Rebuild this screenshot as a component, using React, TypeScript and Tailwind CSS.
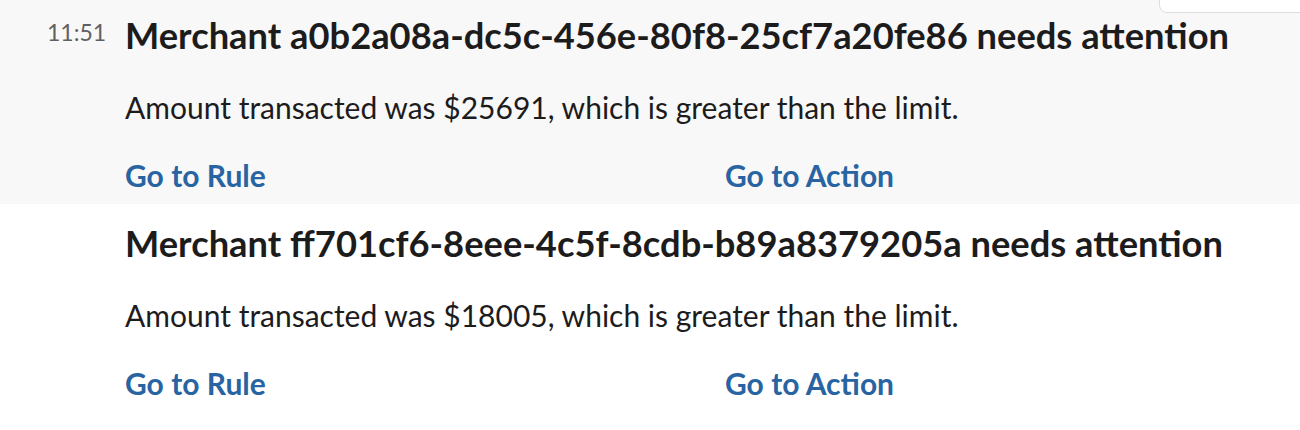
const LINK = "#2864a2";

type Alert = { id: string; amount: number; time?: string; highlight?: boolean };

const ALERTS: Alert[] = [
  { id: "a0b2a08a-dc5c-456e-80f8-25cf7a20fe86", amount: 25691, time: "11:51", highlight: true },
  { id: "ff701cf6-8eee-4c5f-8cdb-b89a8379205a", amount: 18005 },
];

function AlertMessage({ alert }: { alert: Alert }) {
  return (
    <div
      className={
        alert.highlight
          ? "flex bg-[#f8f8f8] pt-[13px] pb-[11px]"
          : "flex bg-white pt-[17px] pb-[11px]"
      }
    >
      <div className="w-[125px] shrink-0 pl-[47px] pt-[5px]">
        {alert.time && (
          <span className="block text-[23px] leading-[28px] text-[#616061]">{alert.time}</span>
        )}
      </div>
      <div className="flex min-w-0 flex-col">
        <div className="whitespace-nowrap text-[36.3px] font-bold leading-[44px] text-[#1d1c1d]">
          Merchant {alert.id} needs attention
        </div>
        <div className="mt-[32px] whitespace-nowrap text-[30px] leading-[36px] text-[#1d1c1d]">
          Amount transacted was ${alert.amount}, which is greater than the limit.
        </div>
        <div className="mt-[32px] grid grid-cols-[600px_600px]">
          <a className="text-[30px] font-bold leading-[36px]" style={{ color: LINK }}>
            Go to Rule
          </a>
          <a className="text-[30px] font-bold leading-[36px]" style={{ color: LINK }}>
            Go to Action
          </a>
        </div>
      </div>
    </div>
  );
}

export default function App() {
  return (
    <div
      className="relative h-[430px] w-[1300px] overflow-hidden bg-white"
      style={{ fontFamily: "Lato, 'Noto Sans', sans-serif" }}
    >
      {ALERTS.map((a) => (
        <AlertMessage key={a.id} alert={a} />
      ))}
      {/* hover toolbar, cut off at the top */}
      <div className="absolute -top-[30px] right-[-12px] h-[43px] w-[153px] rounded-lg border border-[#dddddd] bg-white" />
    </div>
  );
}
